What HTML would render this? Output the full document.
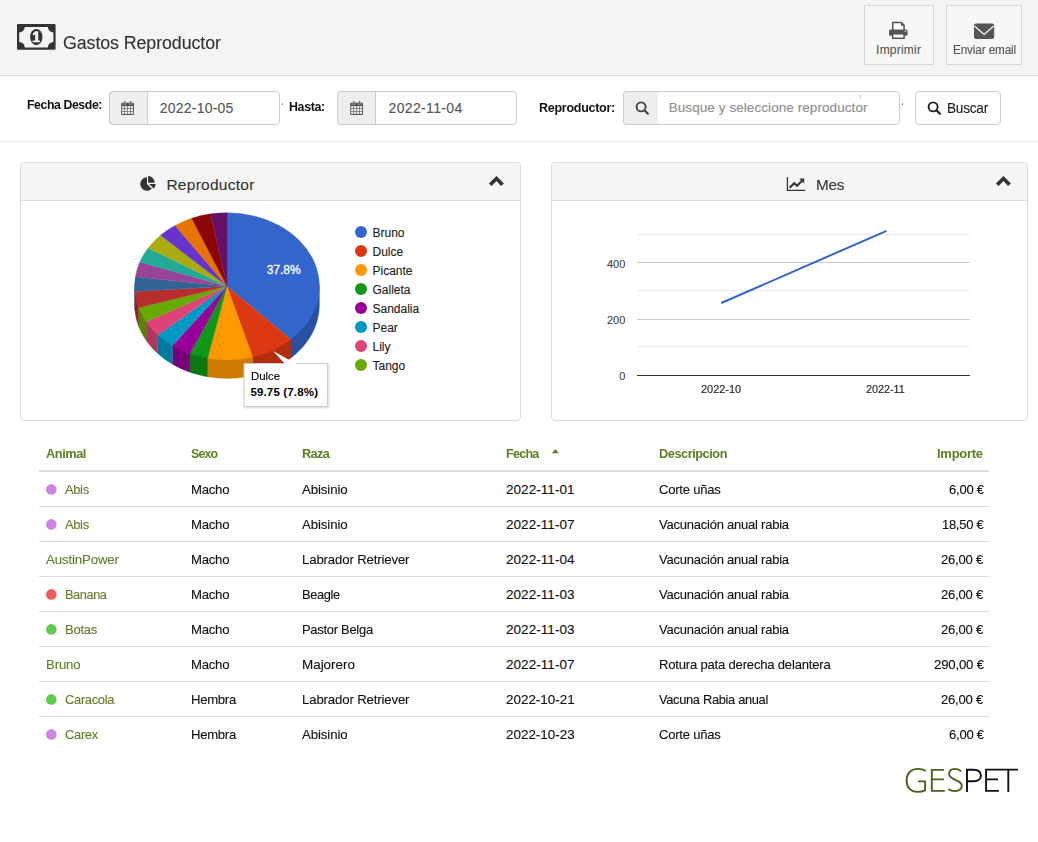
<!DOCTYPE html>
<html><head><meta charset="utf-8">
<style>
*{margin:0;padding:0;box-sizing:border-box}
html,body{width:1038px;height:842px;overflow:hidden;background:#fff;font-family:"Liberation Sans",sans-serif;color:#333}
.a{position:absolute;white-space:nowrap;-webkit-text-stroke:0.12px currentColor}
svg{position:absolute;overflow:visible}
</style></head><body>
<div class="a" style="left:0px;top:0px;width:1038px;height:75px;background:#f4f4f4"></div>
<div class="a" style="left:0px;top:75px;width:1038px;height:1px;background:#dcdcdc"></div>
<svg style="left:17px;top:24px" width="39" height="26" viewBox="0 0 39 26">
<rect x="0" y="0" width="38.6" height="25.8" rx="1.2" fill="#333"/>
<path d="M7.7 2.9 L30.9 2.9 A5.5 5.5 0 0 0 36.4 8.4 L36.4 17.9 A5.5 5.5 0 0 0 30.9 23.4 L7.7 23.4 A5.5 5.5 0 0 0 2.2 17.9 L2.2 8.4 A5.5 5.5 0 0 0 7.7 2.9 Z" fill="#f4f4f4"/>
<ellipse cx="19.3" cy="13.1" rx="6.2" ry="8.1" fill="#333"/>
<path d="M18.2 7.2 L21.2 7.2 L21.2 16.6 L22.9 16.6 L22.9 18.3 L15.6 18.3 L15.6 16.6 L18.2 16.6 L18.2 10.6 L15.9 11.4 L15.9 9.4 Z" fill="#f4f4f4"/>
</svg>
<div class="a" style="left:62.60px;top:34.00px;font-size:18px;line-height:18px;font-weight:normal;color:#333;letter-spacing:-0.095px;transform:scaleX(0.9901);transform-origin:0 0;">Gastos Reproductor</div>
<div class="a" style="left:864px;top:5px;width:70px;height:60px;background:#f7f7f7;border:1px solid #d8d8d8"></div>
<div class="a" style="left:946px;top:5px;width:76px;height:60px;background:#f7f7f7;border:1px solid #d8d8d8"></div>
<svg style="left:889px;top:21px" width="19" height="19" viewBox="0 0 19 19">
<path d="M3.7 9 L3.7 1.6 L12.4 1.6 L15.1 4.3 L15.1 9" fill="#fff" stroke="#555" stroke-width="1.5"/>
<path d="M12 1.2 L15.5 4.7 L12 4.7 Z" fill="#555"/>
<rect x="0" y="8.5" width="18.6" height="6.3" rx="1.6" fill="#555"/>
<circle cx="16.3" cy="10.3" r="0.7" fill="#fff"/>
<rect x="3.7" y="12.8" width="11.4" height="4.5" fill="#fff" stroke="#555" stroke-width="1.5"/>
</svg>
<div class="a" style="left:876.10px;top:44.00px;font-size:12px;line-height:12px;font-weight:normal;color:#555;letter-spacing:0.211px;">Imprimir</div>
<svg style="left:974px;top:23px" width="21" height="17" viewBox="0 0 21 17">
<rect x="0" y="0.5" width="20.2" height="15.5" rx="2" fill="#555"/>
<path d="M0.5 3 L10.1 11.5 L19.7 3" fill="none" stroke="#f7f7f7" stroke-width="1.3"/>
</svg>
<div class="a" style="left:952.70px;top:44.00px;font-size:12px;line-height:12px;font-weight:normal;color:#555;letter-spacing:-0.131px;transform:scaleX(0.9786);transform-origin:0 0;">Enviar email</div>
<div class="a" style="left:0px;top:141px;width:1038px;height:1px;background:#eaeaea"></div>
<div class="a" style="left:26.80px;top:98.00px;font-size:13px;line-height:13px;font-weight:bold;color:#111;letter-spacing:-0.438px;transform:scaleX(0.9460);transform-origin:0 0;-webkit-text-stroke:0;">Fecha Desde:</div>
<div class="a" style="left:289.00px;top:100.00px;font-size:13px;line-height:13px;font-weight:bold;color:#111;letter-spacing:-0.382px;transform:scaleX(0.9542);transform-origin:0 0;-webkit-text-stroke:0;">Hasta:</div>
<div class="a" style="left:538.90px;top:101.00px;font-size:13px;line-height:13px;font-weight:bold;color:#111;letter-spacing:-0.289px;transform:scaleX(0.9628);transform-origin:0 0;-webkit-text-stroke:0;">Reproductor:</div>
<div class="a" style="left:109px;top:91px;width:171px;height:34px;border:1px solid #ccc;border-radius:4px;background:#fff"></div>
<div class="a" style="left:109px;top:91px;width:39px;height:34px;border:1px solid #ccc;border-radius:4px 0 0 4px;background:#eee"></div>
<svg style="left:121.2px;top:101px" width="13" height="14" viewBox="0 0 13 14">
<rect x="0.2" y="1.8" width="12.8" height="12.1" rx="1" fill="#555"/>
<g fill="#eee">
<rect x="1.1" y="5.1" width="2.3" height="2.1"/><rect x="4.0" y="5.1" width="2.3" height="2.1"/><rect x="6.9" y="5.1" width="2.3" height="2.1"/><rect x="9.8" y="5.1" width="2.3" height="2.1"/>
<rect x="1.1" y="7.8" width="2.3" height="2.2"/><rect x="4.0" y="7.8" width="2.3" height="2.2"/><rect x="6.9" y="7.8" width="2.3" height="2.2"/><rect x="9.8" y="7.8" width="2.3" height="2.2"/>
<rect x="1.1" y="10.6" width="2.3" height="2.3"/><rect x="4.0" y="10.6" width="2.3" height="2.3"/><rect x="6.9" y="10.6" width="2.3" height="2.3"/><rect x="9.8" y="10.6" width="2.3" height="2.3"/>
</g>
<rect x="2.9" y="0" width="1.8" height="3.6" rx="0.6" fill="#555" stroke="#eee" stroke-width="0.4"/>
<rect x="8.6" y="0" width="1.8" height="3.6" rx="0.6" fill="#555" stroke="#eee" stroke-width="0.4"/>
</svg>
<div class="a" style="left:159.70px;top:101.00px;font-size:14px;line-height:14px;font-weight:normal;color:#555;letter-spacing:0.232px;">2022-10-05</div>
<div class="a" style="left:337px;top:91px;width:180px;height:34px;border:1px solid #ccc;border-radius:4px;background:#fff"></div>
<div class="a" style="left:337px;top:91px;width:39px;height:34px;border:1px solid #ccc;border-radius:4px 0 0 4px;background:#eee"></div>
<svg style="left:350.1px;top:101px" width="13" height="14" viewBox="0 0 13 14">
<rect x="0.2" y="1.8" width="12.8" height="12.1" rx="1" fill="#555"/>
<g fill="#eee">
<rect x="1.1" y="5.1" width="2.3" height="2.1"/><rect x="4.0" y="5.1" width="2.3" height="2.1"/><rect x="6.9" y="5.1" width="2.3" height="2.1"/><rect x="9.8" y="5.1" width="2.3" height="2.1"/>
<rect x="1.1" y="7.8" width="2.3" height="2.2"/><rect x="4.0" y="7.8" width="2.3" height="2.2"/><rect x="6.9" y="7.8" width="2.3" height="2.2"/><rect x="9.8" y="7.8" width="2.3" height="2.2"/>
<rect x="1.1" y="10.6" width="2.3" height="2.3"/><rect x="4.0" y="10.6" width="2.3" height="2.3"/><rect x="6.9" y="10.6" width="2.3" height="2.3"/><rect x="9.8" y="10.6" width="2.3" height="2.3"/>
</g>
<rect x="2.9" y="0" width="1.8" height="3.6" rx="0.6" fill="#555" stroke="#eee" stroke-width="0.4"/>
<rect x="8.6" y="0" width="1.8" height="3.6" rx="0.6" fill="#555" stroke="#eee" stroke-width="0.4"/>
</svg>
<div class="a" style="left:388.50px;top:101.00px;font-size:14px;line-height:14px;font-weight:normal;color:#555;letter-spacing:0.347px;">2022-11-04</div>
<div class="a" style="left:623px;top:91px;width:277px;height:34px;border:1px solid #ccc;border-radius:4px;background:#fff"></div>
<div class="a" style="left:623px;top:91px;width:35px;height:34px;border:1px solid #ccc;border-right:none;border-radius:4px 0 0 4px;background:#eee"></div>
<svg style="left:636.4px;top:103.4px" width="13" height="12" viewBox="0 0 13 12">
<circle cx="5.1" cy="3.9" r="4.5" fill="none" stroke="#444" stroke-width="1.9"/>
<path d="M8.4 7.3 L11.9 10.7" stroke="#444" stroke-width="2.2" stroke-linecap="round"/>
</svg>
<div class="a" style="left:668.70px;top:100.75px;font-size:13.5px;line-height:13.5px;font-weight:normal;color:#8e8e8e;letter-spacing:0.073px;">Busque y seleccione reproductor</div>
<div class="a" style="left:915px;top:91px;width:86px;height:34px;border:1px solid #ccc;border-radius:4px;background:#fff"></div>
<svg style="left:928px;top:102.8px" width="13" height="12" viewBox="0 0 13 12">
<circle cx="5.1" cy="3.9" r="4.5" fill="none" stroke="#222" stroke-width="1.9"/>
<path d="M8.4 7.3 L11.9 10.7" stroke="#222" stroke-width="2.2" stroke-linecap="round"/>
</svg>
<div class="a" style="left:946.60px;top:101.00px;font-size:14px;line-height:14px;font-weight:normal;color:#222;letter-spacing:-0.243px;transform:scaleX(0.9728);transform-origin:0 0;">Buscar</div>
<div class="a" style="left:20px;top:162px;width:501px;height:259px;border:1px solid #dcdcdc;border-radius:4px;background:#fff;overflow:hidden"></div>
<div class="a" style="left:21px;top:163px;width:499px;height:37px;background:#f5f5f5;border-radius:3px 3px 0 0"></div>
<div class="a" style="left:21px;top:200px;width:499px;height:1px;background:#dcdcdc"></div>
<div class="a" style="left:551px;top:162px;width:477px;height:259px;border:1px solid #dcdcdc;border-radius:4px;background:#fff;overflow:hidden"></div>
<div class="a" style="left:552px;top:163px;width:475px;height:37px;background:#f5f5f5;border-radius:3px 3px 0 0"></div>
<div class="a" style="left:552px;top:200px;width:475px;height:1px;background:#dcdcdc"></div>
<svg style="left:488px;top:175px" width="17" height="12" viewBox="0 0 17 12">
<path d="M8.5 0.9 L15.9 8.4 L13 11.1 L8.5 6.1 L3.6 11.1 L0.9 8.4 Z" fill="#333"/></svg>
<svg style="left:995px;top:175px" width="17" height="12" viewBox="0 0 17 12">
<path d="M8.5 0.9 L15.9 8.4 L13 11.1 L8.5 6.1 L3.6 11.1 L0.9 8.4 Z" fill="#333"/></svg>
<svg style="left:136px;top:172px" width="24" height="22" viewBox="0 0 24 22">
<path d="M11 12 L11 5.3 A6.7 6.7 0 1 0 15.74 16.74 Z" fill="#333"/>
<path d="M12.1 10.7 L12.1 4.1 A6.6 6.6 0 0 1 18.7 10.7 Z" fill="#333"/>
<path d="M13.2 12.1 L19.7 12.1 A6.5 6.5 0 0 1 17.8 16.7 Z" fill="#333"/>
</svg>
<div class="a" style="left:166.40px;top:176.75px;font-size:15.5px;line-height:15.5px;font-weight:normal;color:#333;letter-spacing:0.270px;">Reproductor</div>
<svg style="left:786px;top:176px" width="20" height="16" viewBox="0 0 20 16">
<path d="M1.4 1 L1.4 14.3 L19.2 14.3" fill="none" stroke="#333" stroke-width="1.3"/>
<path d="M3.6 11.8 L8.2 7.2 L11 9.8 L16.5 4.2" fill="none" stroke="#333" stroke-width="2"/>
<path d="M13.2 2.6 L18.2 2.6 L18.2 7.6 Z" fill="#333"/>
</svg>
<div class="a" style="left:815.80px;top:176.75px;font-size:15.5px;line-height:15.5px;font-weight:normal;color:#333;letter-spacing:-0.223px;transform:scaleX(0.9850);transform-origin:0 0;">Mes</div>
<svg style="left:0px;top:0px" width="1038" height="842" viewBox="0 0 1038 842">
<path d="M319.40 284.30 L319.35 286.77 L319.19 289.24 L318.93 291.71 L318.57 294.16 L318.10 296.61 L317.53 299.04 L316.86 301.45 L316.08 303.84 L315.21 306.22 L314.23 308.57 L313.16 310.89 L311.99 313.18 L310.73 315.43 L309.37 317.66 L307.91 319.84 L306.37 321.99 L304.73 324.09 L303.01 326.15 L301.20 328.16 L299.31 330.12 L297.34 332.03 L295.29 333.88 L293.16 335.68 L290.95 337.42 L290.95 357.92 L293.16 356.18 L295.29 354.38 L297.34 352.53 L299.31 350.62 L301.20 348.66 L303.01 346.65 L304.73 344.59 L306.37 342.49 L307.91 340.34 L309.37 338.16 L310.73 335.93 L311.99 333.68 L313.16 331.39 L314.23 329.07 L315.21 326.72 L316.08 324.34 L316.86 321.95 L317.53 319.54 L318.10 317.11 L318.57 314.66 L318.93 312.21 L319.19 309.74 L319.35 307.27 L319.40 304.80 Z" fill="#2851a3" stroke="#2851a3" stroke-width="0.3"/>
<path d="M290.95 337.42 L288.60 339.15 L286.18 340.82 L283.69 342.42 L281.12 343.95 L278.50 345.41 L275.81 346.79 L273.06 348.10 L270.26 349.34 L267.40 350.49 L264.50 351.57 L261.55 352.56 L258.56 353.47 L255.53 354.30 L252.47 355.05 L252.47 375.55 L255.53 374.80 L258.56 373.97 L261.55 373.06 L264.50 372.07 L267.40 370.99 L270.26 369.84 L273.06 368.60 L275.81 367.29 L278.50 365.91 L281.12 364.45 L283.69 362.92 L286.18 361.32 L288.60 359.65 L290.95 357.92 Z" fill="#b02d0e" stroke="#b02d0e" stroke-width="0.3"/>
<path d="M252.47 355.05 L249.55 355.67 L246.61 356.22 L243.65 356.70 L240.67 357.09 L237.67 357.41 L234.67 357.65 L231.65 357.81 L228.63 357.89 L225.61 357.89 L222.59 357.82 L219.58 357.66 L216.57 357.43 L213.58 357.12 L210.60 356.73 L207.63 356.26 L207.63 376.76 L210.60 377.23 L213.58 377.62 L216.57 377.93 L219.58 378.16 L222.59 378.32 L225.61 378.39 L228.63 378.39 L231.65 378.31 L234.67 378.15 L237.67 377.91 L240.67 377.59 L243.65 377.20 L246.61 376.72 L249.55 376.17 L252.47 375.55 Z" fill="#cc7a00" stroke="#cc7a00" stroke-width="0.3"/>
<path d="M207.63 356.26 L204.59 355.70 L201.58 355.06 L198.60 354.34 L195.65 353.53 L192.74 352.65 L189.86 351.69 L189.86 372.19 L192.74 373.15 L195.65 374.03 L198.60 374.84 L201.58 375.56 L204.59 376.20 L207.63 376.76 Z" fill="#0c7813" stroke="#0c7813" stroke-width="0.3"/>
<path d="M189.86 351.69 L187.24 350.74 L184.66 349.72 L182.12 348.64 L179.63 347.49 L177.18 346.28 L174.78 345.02 L172.43 343.69 L172.43 364.19 L174.78 365.52 L177.18 366.78 L179.63 367.99 L182.12 369.14 L184.66 370.22 L187.24 371.24 L189.86 372.19 Z" fill="#7a007a" stroke="#7a007a" stroke-width="0.3"/>
<path d="M172.43 343.69 L170.17 342.33 L167.96 340.92 L165.81 339.45 L163.71 337.93 L161.68 336.36 L159.71 334.74 L157.80 333.07 L157.80 353.57 L159.71 355.24 L161.68 356.86 L163.71 358.43 L165.81 359.95 L167.96 361.42 L170.17 362.83 L172.43 364.19 Z" fill="#007a9e" stroke="#007a9e" stroke-width="0.3"/>
<path d="M157.80 333.07 L155.91 331.31 L154.09 329.51 L152.34 327.66 L150.67 325.78 L149.07 323.85 L147.55 321.88 L146.11 319.87 L146.11 340.37 L147.55 342.38 L149.07 344.35 L150.67 346.28 L152.34 348.16 L154.09 350.01 L155.91 351.81 L157.80 353.57 Z" fill="#b0365f" stroke="#b0365f" stroke-width="0.3"/>
<path d="M146.11 319.87 L144.81 317.93 L143.58 315.95 L142.43 313.95 L141.35 311.92 L140.36 309.87 L139.43 307.79 L138.59 305.70 L138.59 326.20 L139.43 328.29 L140.36 330.37 L141.35 332.42 L142.43 334.45 L143.58 336.45 L144.81 338.43 L146.11 340.37 Z" fill="#518800" stroke="#518800" stroke-width="0.3"/>
<path d="M138.59 305.70 L137.77 303.42 L137.05 301.12 L136.41 298.81 L135.87 296.48 L135.43 294.14 L135.08 291.79 L134.83 289.43 L134.83 309.93 L135.08 312.29 L135.43 314.64 L135.87 316.98 L136.41 319.31 L137.05 321.62 L137.77 323.92 L138.59 326.20 Z" fill="#932424" stroke="#932424" stroke-width="0.3"/>
<path d="M134.83 289.43 L134.70 287.72 L134.63 286.01 L134.60 284.30 L134.60 304.80 L134.63 306.51 L134.70 308.22 L134.83 309.93 Z" fill="#274f77" stroke="#274f77" stroke-width="0.3"/>
<path d="M227.0 286.3 L227.00 212.70 A92.4 73.6 0 0 1 290.95 339.42 Z" fill="#3366cc" stroke="#3366cc" stroke-width="0.3"/>
<path d="M227.0 286.3 L290.95 339.42 A92.4 73.6 0 0 1 252.47 357.05 Z" fill="#dc3912" stroke="#dc3912" stroke-width="0.3"/>
<path d="M227.0 286.3 L252.47 357.05 A92.4 73.6 0 0 1 207.63 358.26 Z" fill="#ff9900" stroke="#ff9900" stroke-width="0.3"/>
<path d="M227.0 286.3 L207.63 358.26 A92.4 73.6 0 0 1 189.86 353.69 Z" fill="#109618" stroke="#109618" stroke-width="0.3"/>
<path d="M227.0 286.3 L189.86 353.69 A92.4 73.6 0 0 1 172.43 345.69 Z" fill="#990099" stroke="#990099" stroke-width="0.3"/>
<path d="M227.0 286.3 L172.43 345.69 A92.4 73.6 0 0 1 157.80 335.07 Z" fill="#0099c6" stroke="#0099c6" stroke-width="0.3"/>
<path d="M227.0 286.3 L157.80 335.07 A92.4 73.6 0 0 1 146.11 321.87 Z" fill="#dd4477" stroke="#dd4477" stroke-width="0.3"/>
<path d="M227.0 286.3 L146.11 321.87 A92.4 73.6 0 0 1 138.59 307.70 Z" fill="#66aa00" stroke="#66aa00" stroke-width="0.3"/>
<path d="M227.0 286.3 L138.59 307.70 A92.4 73.6 0 0 1 134.83 291.43 Z" fill="#b82e2e" stroke="#b82e2e" stroke-width="0.3"/>
<path d="M227.0 286.3 L134.83 291.43 A92.4 73.6 0 0 1 135.37 276.82 Z" fill="#316395" stroke="#316395" stroke-width="0.3"/>
<path d="M227.0 286.3 L135.37 276.82 A92.4 73.6 0 0 1 139.74 262.10 Z" fill="#994499" stroke="#994499" stroke-width="0.3"/>
<path d="M227.0 286.3 L139.74 262.10 A92.4 73.6 0 0 1 148.13 247.95 Z" fill="#22aa99" stroke="#22aa99" stroke-width="0.3"/>
<path d="M227.0 286.3 L148.13 247.95 A92.4 73.6 0 0 1 160.53 235.17 Z" fill="#aaaa11" stroke="#aaaa11" stroke-width="0.3"/>
<path d="M227.0 286.3 L160.53 235.17 A92.4 73.6 0 0 1 175.06 225.43 Z" fill="#6633cc" stroke="#6633cc" stroke-width="0.3"/>
<path d="M227.0 286.3 L175.06 225.43 A92.4 73.6 0 0 1 191.64 218.30 Z" fill="#e67300" stroke="#e67300" stroke-width="0.3"/>
<path d="M227.0 286.3 L191.64 218.30 A92.4 73.6 0 0 1 210.64 213.86 Z" fill="#8b0707" stroke="#8b0707" stroke-width="0.3"/>
<path d="M227.0 286.3 L210.64 213.86 A92.4 73.6 0 0 1 227.00 212.70 Z" fill="#651067" stroke="#651067" stroke-width="0.3"/>
</svg>
<div class="a" style="left:266.70px;top:264.00px;font-size:12px;line-height:12px;font-weight:normal;color:#fff;letter-spacing:0.000px;-webkit-text-stroke:0.3px #fff;">37.8%</div>
<svg style="left:354.8px;top:226.0px" width="12" height="12"><circle cx="6" cy="6" r="6" fill="#3366cc"/></svg>
<div class="a" style="left:372.50px;top:227.00px;font-size:12px;line-height:12px;font-weight:normal;color:#222;letter-spacing:0.000px;">Bruno</div>
<svg style="left:354.8px;top:245.0px" width="12" height="12"><circle cx="6" cy="6" r="6" fill="#dc3912"/></svg>
<div class="a" style="left:372.50px;top:246.00px;font-size:12px;line-height:12px;font-weight:normal;color:#222;letter-spacing:0.000px;">Dulce</div>
<svg style="left:354.8px;top:264.0px" width="12" height="12"><circle cx="6" cy="6" r="6" fill="#ff9900"/></svg>
<div class="a" style="left:372.50px;top:265.00px;font-size:12px;line-height:12px;font-weight:normal;color:#222;letter-spacing:0.000px;">Picante</div>
<svg style="left:354.8px;top:283.0px" width="12" height="12"><circle cx="6" cy="6" r="6" fill="#109618"/></svg>
<div class="a" style="left:372.50px;top:284.00px;font-size:12px;line-height:12px;font-weight:normal;color:#222;letter-spacing:0.000px;">Galleta</div>
<svg style="left:354.8px;top:302.0px" width="12" height="12"><circle cx="6" cy="6" r="6" fill="#990099"/></svg>
<div class="a" style="left:372.50px;top:303.00px;font-size:12px;line-height:12px;font-weight:normal;color:#222;letter-spacing:0.000px;">Sandalia</div>
<svg style="left:354.8px;top:321.0px" width="12" height="12"><circle cx="6" cy="6" r="6" fill="#0099c6"/></svg>
<div class="a" style="left:372.50px;top:322.00px;font-size:12px;line-height:12px;font-weight:normal;color:#222;letter-spacing:0.000px;">Pear</div>
<svg style="left:354.8px;top:340.0px" width="12" height="12"><circle cx="6" cy="6" r="6" fill="#dd4477"/></svg>
<div class="a" style="left:372.50px;top:341.00px;font-size:12px;line-height:12px;font-weight:normal;color:#222;letter-spacing:0.000px;">Lily</div>
<svg style="left:354.8px;top:359.0px" width="12" height="12"><circle cx="6" cy="6" r="6" fill="#66aa00"/></svg>
<div class="a" style="left:372.50px;top:360.00px;font-size:12px;line-height:12px;font-weight:normal;color:#222;letter-spacing:0.000px;">Tango</div>
<svg style="left:0;top:0" width="1038" height="842" viewBox="0 0 1038 842">
<rect x="244" y="363.5" width="83.5" height="43" fill="#fff" stroke="#ccc" stroke-width="1" style="filter:drop-shadow(1px 1px 1px rgba(0,0,0,0.15))"/>
<path d="M273.1 351.1 L285.1 364 L296.7 364 Z" fill="#fff"/>
</svg>
<div class="a" style="left:250.90px;top:371.25px;font-size:11.5px;line-height:11.5px;font-weight:normal;color:#000;letter-spacing:-0.026px;transform:scaleX(0.9965);transform-origin:0 0;">Dulce</div>
<div class="a" style="left:250.40px;top:387.25px;font-size:11.5px;line-height:11.5px;font-weight:bold;color:#000;letter-spacing:0.159px;-webkit-text-stroke:0;">59.75 (7.8%)</div>
<svg style="left:0;top:0" width="1038" height="842" viewBox="0 0 1038 842">
<rect x="637" y="234" width="333" height="1" fill="#ebebeb"/>
<rect x="637" y="262" width="333" height="1" fill="#cccccc"/>
<rect x="637" y="290" width="333" height="1" fill="#ebebeb"/>
<rect x="637" y="319" width="333" height="1" fill="#cccccc"/>
<rect x="637" y="346" width="333" height="1" fill="#ebebeb"/>
<rect x="637" y="375" width="333" height="1" fill="#333"/>
<path d="M721.3 303 L886.6 230.8" stroke="#3366cc" stroke-width="2" fill="none"/>
</svg>
<div class="a" style="left:606.95px;top:258.50px;font-size:11px;line-height:11px;font-weight:normal;color:#444;letter-spacing:0.000px;">400</div>
<div class="a" style="left:606.95px;top:314.50px;font-size:11px;line-height:11px;font-weight:normal;color:#444;letter-spacing:0.000px;">200</div>
<div class="a" style="left:619.18px;top:370.50px;font-size:11px;line-height:11px;font-weight:normal;color:#444;letter-spacing:0.000px;">0</div>
<div class="a" style="left:700.60px;top:383.50px;font-size:11px;line-height:11px;font-weight:normal;color:#222;letter-spacing:-0.014px;transform:scaleX(0.9979);transform-origin:0 0;">2022-10</div>
<div class="a" style="left:866.40px;top:383.50px;font-size:11px;line-height:11px;font-weight:normal;color:#222;letter-spacing:-0.064px;transform:scaleX(0.9904);transform-origin:0 0;">2022-11</div>
<div class="a" style="left:46.40px;top:446.75px;font-size:13.5px;line-height:13.5px;font-weight:bold;color:#5c8022;letter-spacing:-0.486px;transform:scaleX(0.9488);transform-origin:0 0;-webkit-text-stroke:0;">Animal</div>
<div class="a" style="left:190.90px;top:446.75px;font-size:13.5px;line-height:13.5px;font-weight:bold;color:#5c8022;letter-spacing:-0.955px;transform:scaleX(0.9184);transform-origin:0 0;-webkit-text-stroke:0;">Sexo</div>
<div class="a" style="left:302.20px;top:446.75px;font-size:13.5px;line-height:13.5px;font-weight:bold;color:#5c8022;letter-spacing:-0.675px;transform:scaleX(0.9398);transform-origin:0 0;-webkit-text-stroke:0;">Raza</div>
<div class="a" style="left:505.60px;top:446.75px;font-size:13.5px;line-height:13.5px;font-weight:bold;color:#5c8022;letter-spacing:-0.770px;transform:scaleX(0.9270);transform-origin:0 0;-webkit-text-stroke:0;">Fecha</div>
<svg style="left:551px;top:448px" width="9" height="6" viewBox="0 0 9 6"><path d="M0.8 5.2 L4.3 1 L7.8 5.2 Z" fill="#5f8420"/></svg>
<div class="a" style="left:659.00px;top:446.75px;font-size:13.5px;line-height:13.5px;font-weight:bold;color:#5c8022;letter-spacing:-0.471px;transform:scaleX(0.9426);transform-origin:0 0;-webkit-text-stroke:0;">Descripcion</div>
<div class="a" style="left:937.30px;top:446.75px;font-size:13.5px;line-height:13.5px;font-weight:bold;color:#5c8022;letter-spacing:-0.294px;transform:scaleX(0.9656);transform-origin:0 0;-webkit-text-stroke:0;">Importe</div>
<div class="a" style="left:39px;top:470px;width:950px;height:2px;background:#dddddd"></div>
<div class="a" style="left:39px;top:506px;width:950px;height:1px;background:#dddddd"></div>
<div class="a" style="left:39px;top:541px;width:950px;height:1px;background:#dddddd"></div>
<div class="a" style="left:39px;top:576px;width:950px;height:1px;background:#dddddd"></div>
<div class="a" style="left:39px;top:611px;width:950px;height:1px;background:#dddddd"></div>
<div class="a" style="left:39px;top:646px;width:950px;height:1px;background:#dddddd"></div>
<div class="a" style="left:39px;top:681px;width:950px;height:1px;background:#dddddd"></div>
<div class="a" style="left:39px;top:716px;width:950px;height:1px;background:#dddddd"></div>
<svg style="left:46.3px;top:483.8px" width="11" height="11"><circle cx="5.3" cy="5.4" r="5.3" fill="#d083e6"/></svg>
<div class="a" style="left:65.00px;top:482.75px;font-size:13.5px;line-height:13.5px;font-weight:normal;color:#5f7f26;letter-spacing:-0.375px;transform:scaleX(0.9589);transform-origin:0 0;">Abis</div>
<div class="a" style="left:191.30px;top:482.75px;font-size:13.5px;line-height:13.5px;font-weight:normal;color:#111;letter-spacing:-0.258px;transform:scaleX(0.9752);transform-origin:0 0;">Macho</div>
<div class="a" style="left:302.30px;top:482.75px;font-size:13.5px;line-height:13.5px;font-weight:normal;color:#111;letter-spacing:-0.122px;transform:scaleX(0.9823);transform-origin:0 0;">Abisinio</div>
<div class="a" style="left:505.90px;top:482.75px;font-size:13.5px;line-height:13.5px;font-weight:normal;color:#111;letter-spacing:0.072px;">2022-11-01</div>
<div class="a" style="left:658.50px;top:482.75px;font-size:13.5px;line-height:13.5px;font-weight:normal;color:#111;letter-spacing:-0.243px;transform:scaleX(0.9679);transform-origin:0 0;">Corte uñas</div>
<div class="a" style="left:948.50px;top:482.75px;font-size:13.5px;line-height:13.5px;font-weight:normal;color:#111;letter-spacing:-0.251px;transform:scaleX(0.9676);transform-origin:0 0;">6,00 €</div>
<svg style="left:46.3px;top:518.8px" width="11" height="11"><circle cx="5.3" cy="5.4" r="5.3" fill="#d083e6"/></svg>
<div class="a" style="left:65.00px;top:517.75px;font-size:13.5px;line-height:13.5px;font-weight:normal;color:#5f7f26;letter-spacing:-0.375px;transform:scaleX(0.9589);transform-origin:0 0;">Abis</div>
<div class="a" style="left:191.30px;top:517.75px;font-size:13.5px;line-height:13.5px;font-weight:normal;color:#111;letter-spacing:-0.258px;transform:scaleX(0.9752);transform-origin:0 0;">Macho</div>
<div class="a" style="left:302.30px;top:517.75px;font-size:13.5px;line-height:13.5px;font-weight:normal;color:#111;letter-spacing:-0.122px;transform:scaleX(0.9823);transform-origin:0 0;">Abisinio</div>
<div class="a" style="left:505.90px;top:517.75px;font-size:13.5px;line-height:13.5px;font-weight:normal;color:#111;letter-spacing:0.072px;">2022-11-07</div>
<div class="a" style="left:658.50px;top:517.75px;font-size:13.5px;line-height:13.5px;font-weight:normal;color:#111;letter-spacing:-0.247px;transform:scaleX(0.9643);transform-origin:0 0;">Vacunación anual rabia</div>
<div class="a" style="left:942.00px;top:517.75px;font-size:13.5px;line-height:13.5px;font-weight:normal;color:#111;letter-spacing:-0.298px;transform:scaleX(0.9619);transform-origin:0 0;">18,50 €</div>
<div class="a" style="left:46.40px;top:552.75px;font-size:13.5px;line-height:13.5px;font-weight:normal;color:#5f7f26;letter-spacing:-0.142px;transform:scaleX(0.9816);transform-origin:0 0;">AustinPower</div>
<div class="a" style="left:191.30px;top:552.75px;font-size:13.5px;line-height:13.5px;font-weight:normal;color:#111;letter-spacing:-0.258px;transform:scaleX(0.9752);transform-origin:0 0;">Macho</div>
<div class="a" style="left:302.30px;top:552.75px;font-size:13.5px;line-height:13.5px;font-weight:normal;color:#111;letter-spacing:-0.152px;transform:scaleX(0.9776);transform-origin:0 0;">Labrador Retriever</div>
<div class="a" style="left:505.90px;top:552.75px;font-size:13.5px;line-height:13.5px;font-weight:normal;color:#111;letter-spacing:0.072px;">2022-11-04</div>
<div class="a" style="left:658.50px;top:552.75px;font-size:13.5px;line-height:13.5px;font-weight:normal;color:#111;letter-spacing:-0.247px;transform:scaleX(0.9643);transform-origin:0 0;">Vacunación anual rabia</div>
<div class="a" style="left:941.40px;top:552.75px;font-size:13.5px;line-height:13.5px;font-weight:normal;color:#111;letter-spacing:-0.244px;transform:scaleX(0.9685);transform-origin:0 0;">26,00 €</div>
<svg style="left:46.3px;top:588.8px" width="11" height="11"><circle cx="5.3" cy="5.4" r="5.3" fill="#f25a5a"/></svg>
<div class="a" style="left:65.00px;top:587.75px;font-size:13.5px;line-height:13.5px;font-weight:normal;color:#5f7f26;letter-spacing:-0.480px;transform:scaleX(0.9510);transform-origin:0 0;">Banana</div>
<div class="a" style="left:191.30px;top:587.75px;font-size:13.5px;line-height:13.5px;font-weight:normal;color:#111;letter-spacing:-0.258px;transform:scaleX(0.9752);transform-origin:0 0;">Macho</div>
<div class="a" style="left:302.30px;top:587.75px;font-size:13.5px;line-height:13.5px;font-weight:normal;color:#111;letter-spacing:-0.413px;transform:scaleX(0.9532);transform-origin:0 0;">Beagle</div>
<div class="a" style="left:505.90px;top:587.75px;font-size:13.5px;line-height:13.5px;font-weight:normal;color:#111;letter-spacing:0.072px;">2022-11-03</div>
<div class="a" style="left:658.50px;top:587.75px;font-size:13.5px;line-height:13.5px;font-weight:normal;color:#111;letter-spacing:-0.247px;transform:scaleX(0.9643);transform-origin:0 0;">Vacunación anual rabia</div>
<div class="a" style="left:941.40px;top:587.75px;font-size:13.5px;line-height:13.5px;font-weight:normal;color:#111;letter-spacing:-0.244px;transform:scaleX(0.9685);transform-origin:0 0;">26,00 €</div>
<svg style="left:46.3px;top:623.8px" width="11" height="11"><circle cx="5.3" cy="5.4" r="5.3" fill="#5fcc4f"/></svg>
<div class="a" style="left:65.00px;top:622.75px;font-size:13.5px;line-height:13.5px;font-weight:normal;color:#5f7f26;letter-spacing:-0.300px;transform:scaleX(0.9664);transform-origin:0 0;">Botas</div>
<div class="a" style="left:191.30px;top:622.75px;font-size:13.5px;line-height:13.5px;font-weight:normal;color:#111;letter-spacing:-0.258px;transform:scaleX(0.9752);transform-origin:0 0;">Macho</div>
<div class="a" style="left:302.30px;top:622.75px;font-size:13.5px;line-height:13.5px;font-weight:normal;color:#111;letter-spacing:-0.294px;transform:scaleX(0.9599);transform-origin:0 0;">Pastor Belga</div>
<div class="a" style="left:505.90px;top:622.75px;font-size:13.5px;line-height:13.5px;font-weight:normal;color:#111;letter-spacing:0.072px;">2022-11-03</div>
<div class="a" style="left:658.50px;top:622.75px;font-size:13.5px;line-height:13.5px;font-weight:normal;color:#111;letter-spacing:-0.247px;transform:scaleX(0.9643);transform-origin:0 0;">Vacunación anual rabia</div>
<div class="a" style="left:941.40px;top:622.75px;font-size:13.5px;line-height:13.5px;font-weight:normal;color:#111;letter-spacing:-0.244px;transform:scaleX(0.9685);transform-origin:0 0;">26,00 €</div>
<div class="a" style="left:46.40px;top:657.75px;font-size:13.5px;line-height:13.5px;font-weight:normal;color:#5f7f26;letter-spacing:-0.181px;transform:scaleX(0.9803);transform-origin:0 0;">Bruno</div>
<div class="a" style="left:191.30px;top:657.75px;font-size:13.5px;line-height:13.5px;font-weight:normal;color:#111;letter-spacing:-0.258px;transform:scaleX(0.9752);transform-origin:0 0;">Macho</div>
<div class="a" style="left:302.30px;top:657.75px;font-size:13.5px;line-height:13.5px;font-weight:normal;color:#111;letter-spacing:-0.027px;transform:scaleX(0.9965);transform-origin:0 0;">Majorero</div>
<div class="a" style="left:505.90px;top:657.75px;font-size:13.5px;line-height:13.5px;font-weight:normal;color:#111;letter-spacing:0.072px;">2022-11-07</div>
<div class="a" style="left:658.50px;top:657.75px;font-size:13.5px;line-height:13.5px;font-weight:normal;color:#111;letter-spacing:-0.211px;transform:scaleX(0.9688);transform-origin:0 0;">Rotura pata derecha delantera</div>
<div class="a" style="left:933.50px;top:657.75px;font-size:13.5px;line-height:13.5px;font-weight:normal;color:#111;letter-spacing:-0.180px;transform:scaleX(0.9766);transform-origin:0 0;">290,00 €</div>
<svg style="left:46.3px;top:693.8px" width="11" height="11"><circle cx="5.3" cy="5.4" r="5.3" fill="#5fcc4f"/></svg>
<div class="a" style="left:65.00px;top:692.75px;font-size:13.5px;line-height:13.5px;font-weight:normal;color:#5f7f26;letter-spacing:-0.339px;transform:scaleX(0.9580);transform-origin:0 0;">Caracola</div>
<div class="a" style="left:191.30px;top:692.75px;font-size:13.5px;line-height:13.5px;font-weight:normal;color:#111;letter-spacing:-0.292px;transform:scaleX(0.9705);transform-origin:0 0;">Hembra</div>
<div class="a" style="left:302.30px;top:692.75px;font-size:13.5px;line-height:13.5px;font-weight:normal;color:#111;letter-spacing:-0.152px;transform:scaleX(0.9776);transform-origin:0 0;">Labrador Retriever</div>
<div class="a" style="left:505.90px;top:692.75px;font-size:13.5px;line-height:13.5px;font-weight:normal;color:#111;letter-spacing:-0.020px;transform:scaleX(0.9974);transform-origin:0 0;">2022-10-21</div>
<div class="a" style="left:658.50px;top:692.75px;font-size:13.5px;line-height:13.5px;font-weight:normal;color:#111;letter-spacing:-0.349px;transform:scaleX(0.9532);transform-origin:0 0;">Vacuna Rabia anual</div>
<div class="a" style="left:941.40px;top:692.75px;font-size:13.5px;line-height:13.5px;font-weight:normal;color:#111;letter-spacing:-0.244px;transform:scaleX(0.9685);transform-origin:0 0;">26,00 €</div>
<svg style="left:46.3px;top:728.8px" width="11" height="11"><circle cx="5.3" cy="5.4" r="5.3" fill="#d083e6"/></svg>
<div class="a" style="left:65.00px;top:727.75px;font-size:13.5px;line-height:13.5px;font-weight:normal;color:#5f7f26;letter-spacing:-0.367px;transform:scaleX(0.9609);transform-origin:0 0;">Carex</div>
<div class="a" style="left:191.30px;top:727.75px;font-size:13.5px;line-height:13.5px;font-weight:normal;color:#111;letter-spacing:-0.292px;transform:scaleX(0.9705);transform-origin:0 0;">Hembra</div>
<div class="a" style="left:302.30px;top:727.75px;font-size:13.5px;line-height:13.5px;font-weight:normal;color:#111;letter-spacing:-0.122px;transform:scaleX(0.9823);transform-origin:0 0;">Abisinio</div>
<div class="a" style="left:505.90px;top:727.75px;font-size:13.5px;line-height:13.5px;font-weight:normal;color:#111;letter-spacing:-0.020px;transform:scaleX(0.9974);transform-origin:0 0;">2022-10-23</div>
<div class="a" style="left:658.50px;top:727.75px;font-size:13.5px;line-height:13.5px;font-weight:normal;color:#111;letter-spacing:-0.243px;transform:scaleX(0.9679);transform-origin:0 0;">Corte uñas</div>
<div class="a" style="left:948.50px;top:727.75px;font-size:13.5px;line-height:13.5px;font-weight:normal;color:#111;letter-spacing:-0.251px;transform:scaleX(0.9676);transform-origin:0 0;">6,00 €</div>
<svg style="left:0;top:0" width="1038" height="842" viewBox="0 0 1038 842" fill="none" stroke-width="1.9">
<g stroke="#4a6118">
<path d="M925.6 770.9 C923.5 769.6 921 768.9 918 768.9 C910.6 768.9 906.6 773.7 906.6 780.4 C906.6 787.2 910.6 791.9 917.5 791.9 C920.5 791.9 923.2 791.3 925.1 790.3 L925.1 781.4 L918.1 781.4"/>
<path d="M943.9 769.9 L931.8 769.9 L931.8 790.9 L944.8 790.9 M931.8 779.4 L943.9 779.4"/>
<path d="M961.2 771.2 C959 769.7 957 768.9 954.8 768.9 C951 768.9 949.2 771.3 949.2 774.2 C949.2 780.3 961.8 779.3 961.8 785.6 C961.8 789.3 958.8 791.1 955 791.1 C952.5 791.1 950 790.3 948.4 789.2"/>
</g>
<g stroke="#111">
<path d="M967 791.9 L967 769.8 L973.5 769.8 C978.5 769.8 980.9 772.3 980.9 775.5 C980.9 779 978.5 781.2 973.5 781.2 L967 781.2"/>
<path d="M1017.9 769.6 L986.1 769.6 L986.1 790.9 L998.9 790.9 M986.1 779.4 L998 779.4"/>
<path d="M1008.3 769.6 L1008.3 791.9"/>
</g></svg>
<div class="a" style="left:282px;top:103.4px;width:1.2px;height:1.8px;background:#666;border-radius:0.5px"></div>
<div class="a" style="left:902px;top:103.4px;width:1.2px;height:1.8px;background:#666;border-radius:0.5px"></div>
<div class="a" style="left:860px;top:95px;width:1px;height:2.5px;background:#bbb"></div>
</body></html>
